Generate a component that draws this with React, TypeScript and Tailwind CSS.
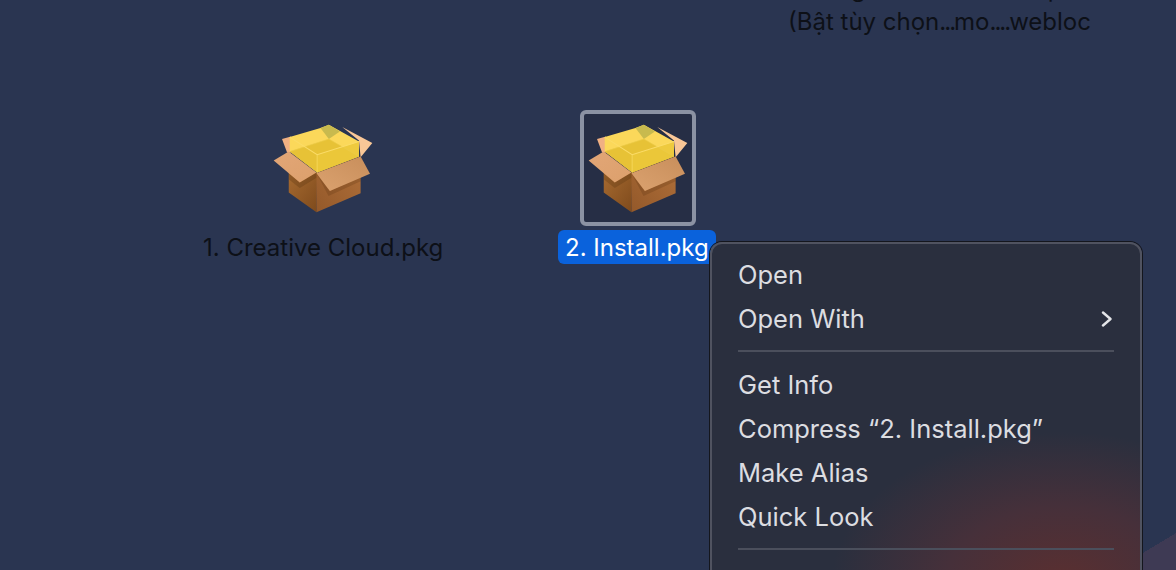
const FONT = "font-['Inter','Liberation_Sans',sans-serif]";

function PackageIcon() {
  return (
    <svg viewBox="35 40 305 272" className="h-[91px] w-[102px]">
      <defs>
        <linearGradient id="boxLeft" x1="0" y1="0" x2="1" y2="1">
          <stop offset="0" stopColor="#a66a30" />
          <stop offset="1" stopColor="#7e4a1c" />
        </linearGradient>
        <linearGradient id="boxRight" x1="0" y1="1" x2="1" y2="0">
          <stop offset="0" stopColor="#94592a" />
          <stop offset="1" stopColor="#b0703a" />
        </linearGradient>
        <linearGradient id="flapLeft" x1="0" y1="0" x2="1" y2="1">
          <stop offset="0" stopColor="#e2a677" />
          <stop offset="1" stopColor="#dca06c" />
        </linearGradient>
        <linearGradient id="flapRight" x1="0" y1="1" x2="1" y2="0">
          <stop offset="0" stopColor="#dba26f" />
          <stop offset="1" stopColor="#c88e5b" />
        </linearGradient>
      </defs>
      {/* back flaps */}
      <polygon points="245,52 335,100 300,142 295,92" fill="#f9c797" />
      <polygon points="65,88 92,80 92,128 80,128" fill="#f0b083" />
      {/* box sides */}
      <polygon points="85,188 170,188 168,307 85,248" fill="url(#boxLeft)" />
      <polygon points="168,190 300,140 300,250 168,307" fill="url(#boxRight)" />
      <polygon points="85,190 118,218 168,188 168,204 118,234 85,208" fill="#4a2a0c" opacity="0.25" />
      <polygon points="168,190 208,243 300,200 300,214 204,258" fill="#4a2a0c" opacity="0.2" />
      {/* see-through cube */}
      <polygon points="88,82 180,55 205,45 295,95 295,140 170,188 88,125" fill="#fbd85a" />
      <polygon points="88,125 205,88 295,140 170,188" fill="#e4c032" opacity="0.9" />
      <polygon points="170,135 295,95 295,140 170,188" fill="#ebc83a" opacity="0.85" />
      <polygon points="180,55 205,45 238,65 205,88" fill="#c8ba4e" />
      <polyline points="90,125 205,88 295,140" fill="none" stroke="#ebcb48" strokeWidth="2" />
      <polyline points="88,82 170,135 295,95" fill="none" stroke="#fbdc68" strokeWidth="3" />
      <line x1="170" y1="135" x2="170" y2="188" stroke="#f5d658" strokeWidth="3" />
      {/* front flaps */}
      <polygon points="40,152 85,125 168,188 118,218" fill="url(#flapLeft)" />
      <polygon points="168,190 300,140 328,192 208,243" fill="url(#flapRight)" />
    </svg>
  );
}

const MENU_GROUPS = [
  [{ label: 'Open' }, { label: 'Open With', submenu: true }],
  [
    { label: 'Get Info' },
    { label: 'Compress “2. Install.pkg”' },
    { label: 'Make Alias' },
    { label: 'Quick Look' },
  ],
];

export default function App() {
  return (
    <div className={`relative h-[570px] w-[1176px] overflow-hidden bg-[#2a3551] ${FONT}`}>
      <div className="absolute right-0 top-[533px] h-[40px] w-[66px] bg-[linear-gradient(to_bottom_right,transparent_50%,#3e3a54_50%)]" />

      {/* note text on the desktop, first line cut off by the crop */}
      <div className="absolute left-[788px] top-[-28px] flex flex-col text-[24px] leading-[33px] text-[#0d1017] whitespace-nowrap">
        <div className="flex gap-[182px] pl-[63px]">
          <span>g</span>
          <span>p</span>
        </div>
        <div>
          (Bật tùy chọn<span className="tracking-[-2px]">...</span>mo<span className="tracking-[-2px]">....</span>webloc
        </div>
      </div>

      {/* desktop items */}
      <div className="absolute left-[195px] top-[110px] flex flex-col items-center gap-[4px]">
        <div className="flex h-[116px] w-[116px] items-center justify-center">
          <PackageIcon />
        </div>
        <div className="flex h-[34px] items-center px-2 pt-[2px] text-[24px] text-[#0d1017] whitespace-nowrap">
          1. Creative Cloud.pkg
        </div>
      </div>

      <div className="absolute left-[558px] top-[110px] flex flex-col items-start gap-[4px]">
        <div className="ml-[22px] flex h-[116px] w-[116px] items-center justify-center rounded-[6px] border-4 border-[#8b92a3] bg-[#262e45]">
          <PackageIcon />
        </div>
        <div className="flex h-[34px] w-[158px] items-center rounded-[6px] bg-[#0a62dc] pl-[7px] pt-[2px] text-[24px] text-white whitespace-nowrap">
          2. Install.pkg
        </div>
      </div>

      {/* context menu */}
      <div className="absolute left-[710px] top-[242px] h-[360px] w-[432px] rounded-[12px] border-2 border-[#505360] bg-[radial-gradient(ellipse_230px_150px_at_350px_338px,#5a2f30_0%,#46303a_50%,#2a2f3e_100%)] px-[26px] pt-[9px] text-[25.5px] text-[#dcdde1] shadow-[0_0_0_1px_#14161d]">
        <div className="flex flex-col">
          {MENU_GROUPS.map((group, i) => (
            <div key={i} className="mb-[11px] flex flex-col border-b-2 border-[#4b4f5c] pb-[9px]">
              {group.map((item) => (
                <div key={item.label} className="flex h-[44px] items-center justify-between whitespace-nowrap">
                  <span>{item.label}</span>
                  {item.submenu && (
                    <svg viewBox="0 0 12 16" className="mr-[1px] h-[16px] w-[12px]" fill="none" stroke="#e4e5e8" strokeWidth="2.4" strokeLinecap="round" strokeLinejoin="round">
                      <path d="M2 1.5 L9.5 8 L2 14.5" />
                    </svg>
                  )}
                </div>
              ))}
            </div>
          ))}
        </div>
      </div>
    </div>
  );
}
